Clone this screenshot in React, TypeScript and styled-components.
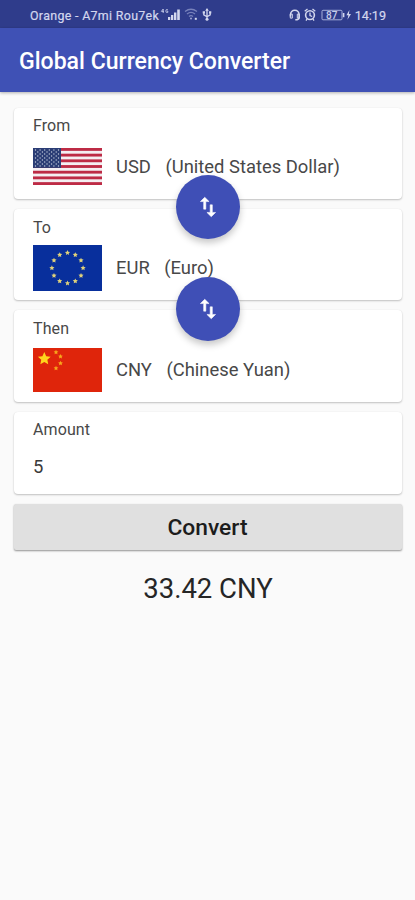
import React from "react";
import styled, { createGlobalStyle } from "styled-components";

const GlobalStyle = createGlobalStyle`
  * { box-sizing: border-box; }
  body { margin: 0; background: #fafafa; font-family: Roboto, "Liberation Sans", sans-serif; }
`;

const Screen = styled.div`
  min-height: 900px;
  background: #fafafa;
  overflow: hidden;
`;

const StatusBar = styled.div`
  height: 28px;
  background: #2f3c8b;
  color: #d3d7ee;
  display: flex;
  align-items: center;
  padding: 2px 29px 0 30px;
  font-size: 12.4px;
  white-space: nowrap;
`;

const Carrier = styled.span`
  width: 130px;
  letter-spacing: 0.33px;
  -webkit-text-stroke: 0.2px #d3d7ee;
`;

const StatusIcons = styled.svg`
  display: block;
  flex: none;
`;

const Clock = styled.span`
  margin-left: 1px;
  font-size: 12.6px;
  -webkit-text-stroke: 0.2px #d3d7ee;
`;

const Spacer = styled.div`
  flex: 1;
`;

const AppBar = styled.header`
  height: 64px;
  background: #3f51b5;
  color: #fff;
  display: flex;
  align-items: center;
  padding: 4px 19px 0;
  box-shadow: 0 1px 3px rgba(0, 0, 0, 0.3);
`;

const Title = styled.h1`
  margin: 0;
  font-size: 23.05px;
  font-weight: 500;
  line-height: 28px;
  white-space: nowrap;
`;

const Content = styled.main`
  padding: 16px 13px 0 14px;
  display: flex;
  flex-direction: column;
`;

const Card = styled.section<{ $height: number; $pad?: number }>`
  position: relative;
  height: ${(p) => p.$height}px;
  margin-bottom: 10px;
  background: #fff;
  border-radius: 4px;
  box-shadow: 0 1px 2px rgba(0, 0, 0, 0.23), 0 0 1px rgba(0, 0, 0, 0.08);
  padding: ${(p) => p.$pad ?? 8}px 19px 0;
`;

const Label = styled.div`
  height: 20px;
  line-height: 20px;
  font-size: 16px;
  letter-spacing: 0.1px;
  color: #484848;
`;

const CurrencyRow = styled.div<{ $top: number }>`
  height: 46px;
  margin-top: ${(p) => p.$top}px;
  display: flex;
  align-items: center;
  font-size: 18.4px;
  color: #484848;
  white-space: nowrap;
`;

const Flag = styled.svg`
  display: block;
  flex: none;
  width: 69px;
  margin-right: 14px;
`;

const Code = styled.span`
  padding-bottom: 1px;
  margin-right: 14.5px;
`;

const CurrencyName = styled.span`
  padding-bottom: 1px;
`;

const Value = styled.div`
  margin-top: 15px;
  line-height: 24px;
  font-size: 18.4px;
  color: #3a3a3a;
`;

const SwapButton = styled.button<{ $drop: number }>`
  position: absolute;
  z-index: 2;
  left: 162px;
  bottom: -${(p) => p.$drop}px;
  width: 64px;
  height: 64px;
  border: 0;
  border-radius: 50%;
  padding: 0;
  display: grid;
  place-items: center;
  background: #3f4fb6;
  box-shadow: 0 4px 7px rgba(0, 0, 0, 0.22);
`;

const ConvertButton = styled.button`
  height: 46px;
  border: 0;
  border-radius: 2px;
  padding: 1px 1px 1px 0;
  background: #e0e0e0;
  box-shadow: 0 1px 2px rgba(0, 0, 0, 0.42);
  font-family: inherit;
  font-size: 22.8px;
  font-weight: 500;
  color: #1c1c1c;
`;

const Result = styled.output`
  display: block;
  margin-top: 21px;
  line-height: 36px;
  text-align: center;
  font-size: 27.5px;
  color: #262626;
`;

const starPoints = (cx: number, cy: number, r: number) =>
  Array.from({ length: 10 }, (_, i) => {
    const a = (i * Math.PI) / 5 - Math.PI / 2;
    const q = i % 2 ? r * 0.48 : r;
    return `${cx + q * Math.cos(a)},${cy + q * Math.sin(a)}`;
  }).join(" ");

const UsFlag = () => (
  <Flag height="38" viewBox="0 0 69 38">
    <rect width="69" height="37" fill="#f4eff2" />
    {[0, 1, 2, 3, 4, 5, 6].map((i) => (
      <rect key={i} y={i * 5.69} width="69" height="2.85" fill="#bd2b45" />
    ))}
    <rect width="28" height="19.9" fill="#2b3d75" />
    {Array.from({ length: 9 }, (_, r) =>
      Array.from({ length: r % 2 ? 5 : 6 }, (_, c) => (
        <circle key={`${r}-${c}`} cx={2.5 + c * 4.6 + (r % 2 ? 2.3 : 0)} cy={2 + r * 2} r="0.65" fill="#c6cede" />
      ))
    )}
  </Flag>
);

const EuFlag = () => (
  <Flag height="46" viewBox="0 0 69 46">
    <rect width="69" height="46" fill="#082f9c" />
    {Array.from({ length: 12 }, (_, i) => {
      const a = (i * Math.PI) / 6;
      return <polygon key={i} points={starPoints(34.5 + 15.6 * Math.cos(a), 23 + 15.2 * Math.sin(a), 2.7)} fill="#e0d27a" />;
    })}
  </Flag>
);

const CnFlag = () => (
  <Flag height="44" viewBox="0 0 69 44">
    <rect width="69" height="44" fill="#df250b" />
    <polygon points={starPoints(11.3, 10.8, 6.7)} fill="#ffd51c" />
    {[[23, 4.2], [27.5, 8.5], [27.5, 15.3], [23, 20.2]].map(([x, y]) => (
      <polygon key={y} points={starPoints(x, y, 2.5)} fill="#f7a81c" />
    ))}
  </Flag>
);

const Swap = ({ drop }: { drop: number }) => (
  <SwapButton $drop={drop} aria-label="Swap">
    <svg width="26" height="26" viewBox="0 0 24 24" fill="#fff" stroke="#fff" strokeWidth="0.5">
      <path d="M9 3 5 6.99h3V14h2V6.99h3L9 3zM16 17.01V10h-2v7.01h-3L15 21l4-3.99h-3z" />
    </svg>
  </SwapButton>
);

const SignalIcons = () => (
  <StatusIcons width="54" height="16" viewBox="160 7 54 16" fill="#d3d7ee">
    <path d="M163.2 9l-1.8 2.4h2.6M163.2 9v4M167.8 9.6q-2-.6-2 1.4t2 1.4v-1.3h-.8" fill="none" stroke="#c4c9e8" strokeWidth="0.9" />
    <path d="M168 17h2.3v3H168zM171 15h2.3v5H171zM174 12.5h2.4V20H174zM177.2 9.5h2.6V20h-2.6z" />
    <g fill="none" stroke="#7882bb" strokeWidth="1.3">
      <path d="M185 11.5q6-4.5 12 0M187 14q4-3.2 8 0M189 16.5q2-1.6 4 0" />
    </g>
    <circle cx="191" cy="18.6" r="1" fill="#9fa7d4" />
    <path d="M194.8 17.8h2v2h-2z" />
    <path d="M207 9.5v10M203.8 12.5v2.3l3.2 2 3.2-2v-2.3" fill="none" stroke="#d3d7ee" strokeWidth="1.3" />
    <path d="M207 8l-1.8 2.7h3.6zM202.7 11.3h2.3v2.2h-2.3zM209 11.3h2.3v2.2H209z" />
    <circle cx="207" cy="19.3" r="1.5" />
  </StatusIcons>
);

const DeviceIcons = () => (
  <StatusIcons width="67" height="16" viewBox="286 6.5 67 16" fill="none" stroke="#d3d7ee" strokeWidth="1.6">
    <path d="M289.5 16v-2a4.3 4.3 0 0 1 8.6 0v3.3q0 2-3.8 2" />
    <path d="M289.3 13.6h2v4h-2zM296.3 13.6h2v4h-2z" strokeWidth="1" />
    <circle cx="309" cy="14.6" r="4.4" />
    <path d="M309 12v3l2.2 1M303.7 10.8l2.8-2.2M314.3 10.8l-2.8-2.2M306 18.5l-1 1.6M312 18.5l1 1.6" strokeWidth="1.3" />
    <rect x="321" y="9.8" width="20" height="9.5" rx="1" strokeWidth="1" stroke="#a6aeda" />
    <path d="M342.6 12.5v4.2" />
    <text x="325" y="18" fontSize="10" fontFamily="Roboto" fontWeight="500" fill="#c7cce8" stroke="none">87</text>
    <path d="M348.4 9.5l-3 5.3h2l-1 4.4 3.6-5.7h-2.1z" fill="#d3d7ee" stroke="none" />
  </StatusIcons>
);

export default function App() {
  return (
    <Screen>
      <GlobalStyle />
      <StatusBar>
        <Carrier>Orange - A7mi Rou7ek</Carrier>
        <SignalIcons />
        <Spacer />
        <DeviceIcons />
        <Clock>14:19</Clock>
      </StatusBar>
      <AppBar>
        <Title>Global Currency Converter</Title>
      </AppBar>
      <Content>
        <Card $height={91}>
          <Label>From</Label>
          <CurrencyRow $top={8}>
            <UsFlag />
            <Code>USD</Code>
            <CurrencyName>(United States Dollar)</CurrencyName>
          </CurrencyRow>
          <Swap drop={40} />
        </Card>
        <Card $height={91} $pad={9}>
          <Label>To</Label>
          <CurrencyRow $top={7}>
            <EuFlag />
            <Code>EUR</Code>
            <CurrencyName>(Euro)</CurrencyName>
          </CurrencyRow>
          <Swap drop={41} />
        </Card>
        <Card $height={92} $pad={9}>
          <Label>Then</Label>
          <CurrencyRow $top={8}>
            <CnFlag />
            <Code>CNY</Code>
            <CurrencyName>(Chinese Yuan)</CurrencyName>
          </CurrencyRow>
        </Card>
        <Card $height={82} $pad={8}>
          <Label>Amount</Label>
          <Value>5</Value>
        </Card>
        <ConvertButton>Convert</ConvertButton>
        <Result>33.42 CNY</Result>
      </Content>
    </Screen>
  );
}
